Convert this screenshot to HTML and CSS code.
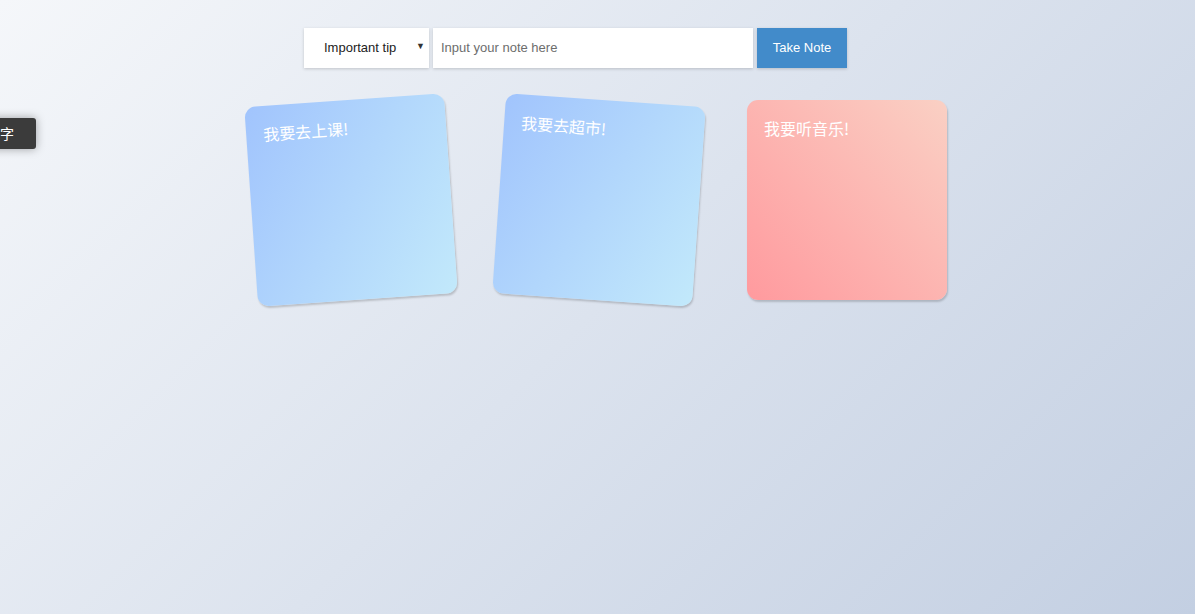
FILE: index.html
```html
<!DOCTYPE html>
<html lang="zh">
<head>
<meta charset="utf-8">
<title>Notes</title>
<link rel="stylesheet" href="styles.css">
</head>
<body>
<div class="page">
  <form class="toolbar">
    <div class="select">
      <span class="select-label">Important tip</span>
      <span class="select-arrow">▼</span>
    </div>
    <input class="note-input" type="text" placeholder="Input your note here">
    <button class="take-btn" type="button">Take Note</button>
  </form>
  <div class="notes">
    <div class="note note-blue tilt-left">我要去上课!</div>
    <div class="note note-blue tilt-right">我要去超市!</div>
    <div class="note note-pink">我要听音乐!</div>
  </div>
</div>
<div class="tooltip">字</div>
</body>
</html>
```

FILE: styles.css
```css
html, body {
  margin: 0;
  padding: 0;
  height: 100%;
}
body {
  background: linear-gradient(135deg, #f5f7fa 0%, #c3cfe2 100%);
  font-family: "Liberation Sans", Arial, "Noto Sans CJK SC", sans-serif;
  overflow: hidden;
  position: relative;
}
.page {
  padding-top: 28px;
}
.toolbar {
  display: flex;
  margin: 0 0 0 304px;
  gap: 4px;
  height: 40px;
}
.select {
  width: 125px;
  height: 40px;
  background: #fff;
  box-shadow: 0 1px 3px rgba(0,0,0,0.18);
  display: flex;
  align-items: center;
  box-sizing: border-box;
  padding-left: 20px;
  padding-right: 4px;
  padding-bottom: 2px;
  font-size: 13px;
  color: #222;
  position: relative;
}
.select-label {
  flex: 1;
}
.select-arrow {
  font-size: 9px;
  color: #333;
  margin-top: -3px;
}
.note-input {
  width: 320px;
  height: 40px;
  box-sizing: border-box;
  border: none;
  outline: none;
  background: #fff;
  box-shadow: 0 1px 3px rgba(0,0,0,0.18);
  padding: 0 8px 2px;
  font-family: "Liberation Sans", Arial, sans-serif;
  font-size: 13px;
  color: #333;
}
.note-input::placeholder {
  color: #6d6d6d;
}
.take-btn {
  width: 90px;
  height: 40px;
  border: none;
  background: #428bca;
  color: #fff;
  font-family: "Liberation Sans", Arial, sans-serif;
  font-size: 13px;
  box-shadow: 0 1px 3px rgba(0,0,0,0.18);
  padding: 0 0 2px;
}
.notes {
  display: flex;
  margin: 32px 0 0 251px;
  gap: 48px;
}
.note {
  width: 200px;
  height: 200px;
  box-sizing: border-box;
  border-radius: 11px;
  padding: 17px 17px;
  color: #fff;
  font-family: "Noto Sans CJK SC", sans-serif;
  font-size: 16px;
  line-height: 22px;
  box-shadow: 1px 2px 2px rgba(0,0,0,0.18);
}
.note-blue {
  background: linear-gradient(120deg, #a1c4fd 0%, #c2e9fb 100%);
}
.note-pink {
  background: linear-gradient(to top right, #ff9a9e 0%, #fad0c4 100%);
}
.tilt-left {
  transform: rotate(-4deg);
}
.tilt-right {
  transform: rotate(4deg);
}
.tooltip {
  position: absolute;
  left: -40px;
  top: 118px;
  width: 76px;
  height: 31px;
  box-sizing: border-box;
  padding-left: 40px;
  background: #3b3b3b;
  border-radius: 3px;
  box-shadow: 0 0 10px rgba(0,0,0,0.35);
  color: #fff;
  font-family: "Noto Sans CJK SC", sans-serif;
  font-size: 14px;
  line-height: 31px;
}
```
